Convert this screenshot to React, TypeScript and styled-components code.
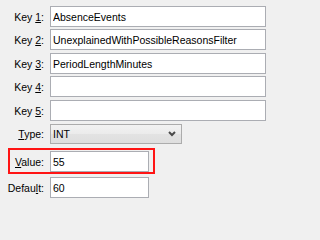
import React from "react";
import styled, { createGlobalStyle } from "styled-components";

const GlobalStyle = createGlobalStyle`
	html, body {
		margin: 0;
		padding: 0;
		background: #f0f0f0;
	}
	body {
		font-family: "Liberation Sans", Arial, sans-serif;
		font-size: 10.5px;
		color: #000;
	}
`;

const Form = styled.div`
	display: flex;
	flex-direction: column;
	box-sizing: border-box;
	width: 272px;
	height: 201px;
	padding-top: 6px;
	overflow: hidden;
`;

const Row = styled.div<{ $top?: number }>`
	display: flex;
	align-items: center;
	gap: 6px;
	margin-top: ${(p) => p.$top ?? 0}px;
`;

const Label = styled.label<{ $width?: number }>`
	flex-shrink: 0;
	width: ${(p) => p.$width ?? 44}px;
	text-align: right;
	white-space: nowrap;

	u {
		text-decoration: underline;
		text-underline-offset: 1px;
	}
`;

const TextBox = styled.input<{ $width: number }>`
	box-sizing: border-box;
	width: ${(p) => p.$width}px;
	height: 21px;
	margin: 0;
	padding: 0 2px;
	border: 1px solid #abadb3;
	border-radius: 0;
	background: #fff;
	font: inherit;
	color: #000;
	outline: none;
`;

const Combo = styled.div`
	box-sizing: border-box;
	display: flex;
	align-items: center;
	justify-content: space-between;
	width: 132px;
	height: 20px;
	padding: 0 5px 0 2px;
	border: 1px solid #acacac;
	background: linear-gradient(#f2f2f2 0%, #ebebeb 50%, #e3e3e3 51%, #dedede 100%);
`;

const Highlight = styled.div`
	box-sizing: border-box;
	width: fit-content;
	margin: 4px 0 0 8px;
	padding: 1px 4px 0 0;
	border: 2px solid #ff1414;
`;

const Chevron = () => (
	<svg width="8" height="6" viewBox="0 0 8 6">
		<polyline points="1,1 4,4 7,1" fill="none" stroke="#4a4a4a" strokeWidth="2" />
	</svg>
);

const keys = [
	{ n: "1", value: "AbsenceEvents", top: 0 },
	{ n: "2", value: "UnexplainedWithPossibleReasonsFilter", top: 2 },
	{ n: "3", value: "PeriodLengthMinutes", top: 3 },
	{ n: "4", value: "", top: 2 },
	{ n: "5", value: "", top: 3 },
];

const App: React.FC = () => {
	return (
		<>
			<GlobalStyle />
			<Form>
				{keys.map((k) => (
					<Row key={k.n} $top={k.top}>
						<Label>
							Key <u>{k.n}</u>:
						</Label>
						<TextBox $width={216} value={k.value} readOnly />
					</Row>
				))}
				<Row $top={3}>
					<Label>
						<u>T</u>ype:
					</Label>
					<Combo>
						<span>INT</span>
						<Chevron />
					</Combo>
				</Row>
				<Highlight>
					<Row>
						<Label $width={34}>
							<u>V</u>alue:
						</Label>
						<TextBox $width={99} value="55" readOnly />
					</Row>
				</Highlight>
				<Row $top={3}>
					<Label>
						Defau<u>l</u>t:
					</Label>
					<TextBox $width={99} value="60" readOnly />
				</Row>
			</Form>
		</>
	);
};

export default App;
